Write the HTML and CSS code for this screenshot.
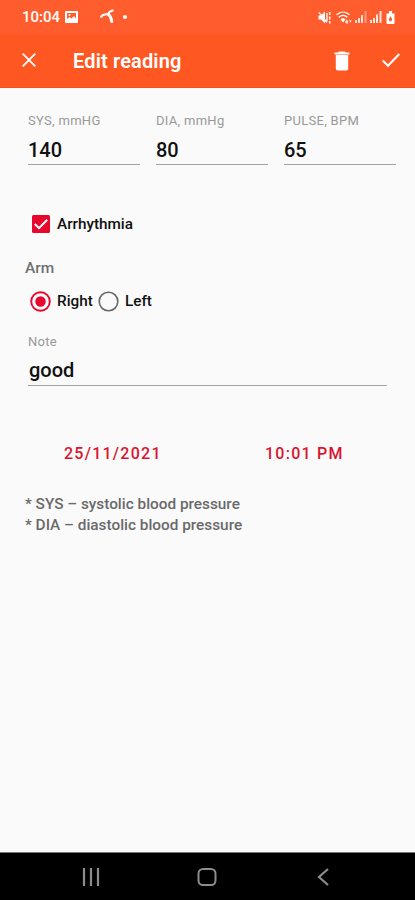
FILE: index.html
```html
<!DOCTYPE html>
<html lang="en">
  <head>
    <meta charset="UTF-8" />
    <meta name="viewport" content="width=device-width, initial-scale=1.0" />
    <title>Edit reading</title>
    <link rel="stylesheet" href="styles.css">
  </head>
  <body>
    <div class="status-bar">
      <span class="clock">10:04</span>
      <svg class="icon-picture" width="13" height="12" viewBox="0 0 13 12">
        <path fill="#fff" fill-rule="evenodd" d="M1 0h11a1 1 0 0 1 1 1v10a1 1 0 0 1-1 1H1a1 1 0 0 1-1-1V1a1 1 0 0 1 1-1zM2 2v6l2.500-2 2 1.500L9 5l2 2.500V2z" />
        <circle cx="4.500" cy="4" r="1" fill="#fff" />
      </svg>
      <svg class="icon-carrier" width="15" height="15" viewBox="0 0 15 15">
        <path fill="none" stroke="#fff" stroke-width="2" d="M.5 8.500C2.500 5.500 5 4.800 8.500 5.500M7.500 5.500C9 3 10.500 1.800 13.500 1.300" />
        <path fill="none" stroke="#fff" stroke-width="3" stroke-linecap="round" d="M9 6c1.700 1.500 2.500 3.800 2.700 6.500" />
      </svg>
      <span class="dot"></span>
      <svg class="icon-mute" width="13" height="13" viewBox="0 0 13 13">
        <path fill="#fff" d="M.5 4.500H3l4-4v12l-4-4H.5z" />
        <path stroke="#fff" stroke-width="1.300" d="M1 1.500l8 10M9 2v8" />
        <path stroke="#fff" stroke-width="1.500" stroke-dasharray="3 1.500" d="M11.700 1v11.500" />
      </svg>
      <svg class="icon-wifi" width="16" height="13" viewBox="0 0 16 13">
        <g fill="none" stroke="#fff" stroke-width="1.400">
          <path d="M.5 3.800c4-3.600 9-3.600 13 0M2.700 6.200c2.800-2.400 5.800-2.400 8.600 0" />
        </g>
        <path fill="#fff" d="M4.500 8.300c1.800-1.400 3.200-1.400 5 0L7 11.500z" />
        <path fill="#fff" opacity=".85" d="M9 10.500l2-2 1 2v2h-2zM13 8.500l2.500 1-1.500 2.500z" />
      </svg>
      <svg class="icon-signal" width="12" height="12" viewBox="0 0 12 12">
        <path fill="#fff" opacity=".8" d="M0 9h2v3H0zM3 7h2v5H3zM6 4h2v8H6z" />
        <path fill="#fff" opacity=".4" d="M9.500 0h2v12h-2z" />
      </svg>
      <svg class="icon-signal" width="12" height="12" viewBox="0 0 12 12">
        <path fill="#fff" opacity=".85" d="M0 9h2v3H0zM3 7h2v5H3zM6 3.500h2v8.500H6zM9.500 0h2v12h-2z" />
      </svg>
      <svg class="icon-battery" width="9" height="13" viewBox="0 0 9 13">
        <path fill="#fff" d="M3 0h3v2.500h2.500V12a1 1 0 0 1-1 1h-6a1 1 0 0 1-1-1V2.500H3z" />
        <path fill="#ff5b2b" d="M4.500 5L6 8a1.600 1.600 0 1 1-3 0z" />
      </svg>
    </div>

    <div class="app-bar">
      <svg class="close" width="14" height="14" viewBox="0 0 14 14">
        <path stroke="#fff" stroke-width="1.800" d="M.7.7l12.600 12.600M13.300.7L.7 13.300" />
      </svg>
      <h1>Edit reading</h1>
      <svg class="trash" width="16" height="20" viewBox="0 0 16 20">
        <path fill="#fff" d="M5 .5h6l.8 1H15.500v2H.5v-2h3.700zM1.800 4h12.400v13.500a2 2 0 0 1-2 2H3.800a2 2 0 0 1-2-2z" />
      </svg>
      <svg class="done" width="18" height="15" viewBox="0 0 18 15">
        <path fill="none" stroke="#fff" stroke-width="2" d="M.7 7.500l5.300 5.300L17.300 1" />
      </svg>
    </div>

    <div class="content">
      <div class="readings">
        <div class="field">
          <label>SYS, mmHG</label>
          <div class="value">140</div>
        </div>
        <div class="field">
          <label>DIA, mmHg</label>
          <div class="value">80</div>
        </div>
        <div class="field">
          <label>PULSE, BPM</label>
          <div class="value">65</div>
        </div>
      </div>

      <div class="option arrhythmia">
        <svg width="18" height="18" viewBox="0 0 18 18">
          <rect width="18" height="18" rx="1.500" fill="#e8062d" />
          <path fill="none" stroke="#fff" stroke-width="2" d="M2.800 9l4.200 4.200 8.200-8.400" />
        </svg>
        <span>Arrhythmia</span>
      </div>

      <div class="arm-title">Arm</div>
      <div class="option arms">
        <svg width="21" height="21" viewBox="0 0 21 21">
          <circle cx="10.500" cy="10.500" r="9.300" fill="none" stroke="#e8062d" stroke-width="1.900" />
          <circle cx="10.500" cy="10.500" r="5.200" fill="#e8062d" />
        </svg>
        <span class="right">Right</span>
        <svg width="21" height="21" viewBox="0 0 21 21">
          <circle cx="10.500" cy="10.500" r="9.300" fill="none" stroke="#666" stroke-width="1.600" />
        </svg>
        <span>Left</span>
      </div>

      <div class="field note">
        <label>Note</label>
        <div class="value">good</div>
      </div>

      <div class="when">
        <span class="date">25/11/2021</span>
        <span class="time">10:01 PM</span>
      </div>

      <div class="legend">
        <div class="sys">* SYS – systolic blood pressure</div>
        <div class="dia">* DIA – diastolic blood pressure</div>
      </div>
    </div>

    <div class="nav-bar">
      <svg width="18" height="18" viewBox="0 0 18 18">
        <path stroke="#8c8c8c" stroke-width="2.200" d="M2 0v18M9 0v18M16 0v18" />
      </svg>
      <svg class="home" width="20" height="18" viewBox="0 0 20 18">
        <rect x="1.500" y="1" width="17" height="16" rx="4.500" fill="none" stroke="#8c8c8c" stroke-width="2" />
      </svg>
      <svg width="12" height="18" viewBox="0 0 12 18">
        <path fill="none" stroke="#8c8c8c" stroke-width="2.200" d="M11 1L2 9l9 8" />
      </svg>
    </div>
  </body>
</html>
```
FILE: styles.css
```css
* {
  box-sizing: border-box;
}
body {
  margin: 0;
  height: 900px;
  display: flex;
  flex-direction: column;
  font-family: Roboto, "Liberation Sans", sans-serif;
  background: #fafafa;
  color: #111;
  overflow: hidden;
}
svg {
  display: block;
  flex: none;
}
.status-bar {
  height: 34px;
  display: flex;
  align-items: center;
  padding: 0 20px 0 22px;
  background: #ff5d2e;
  color: #fff;
}
.clock {
  width: 43px;
  font-size: 15px;
  font-weight: 500;
}
.icon-carrier {
  margin-left: 22px;
  margin-top: -1px;
}
.dot {
  width: 4px;
  height: 4px;
  margin-left: 8px;
  border-radius: 50%;
  background: #fff;
}
.icon-mute {
  margin-left: auto;
}
.icon-wifi {
  margin-left: 5px;
}
.icon-signal {
  margin-left: 3px;
}
.icon-battery {
  margin-left: 4px;
}
.app-bar {
  height: 54px;
  display: flex;
  align-items: center;
  padding: 0 15px 0 22px;
  background: #ff5722;
  border-bottom: 1px solid #f9501d;
  color: #fff;
}
.app-bar h1 {
  margin: 0 auto 0 37px;
  font-size: 20px;
  font-weight: 600;
  letter-spacing: 0.150px;
}
.close {
  margin-top: -1px;
}
.done {
  margin-left: 32px;
}
.content {
  flex: 1;
  padding: 24px 0 0 25px;
}
.readings {
  display: flex;
  gap: 16px;
  margin-left: 3px;
}
.readings .field {
  width: 112px;
}
.field {
  border-bottom: 1px solid #a3a3a3;
}
.field label {
  display: block;
  font-size: 13px;
  line-height: 18px;
  letter-spacing: 0.3px;
  color: #999;
}
.value {
  height: 34px;
  font-size: 20px;
  line-height: 40px;
  font-weight: 500;
}
.option {
  display: flex;
  align-items: center;
  font-size: 15.300px;
  font-weight: 500;
}
.arrhythmia {
  height: 22px;
  margin: 48px 0 0 7px;
  gap: 7px;
}
.arm-title {
  margin-top: 23px;
  font-size: 15.500px;
  line-height: 20px;
  font-weight: 500;
  color: #707070;
}
.arms {
  height: 24px;
  margin: 11px 0 0 5px;
  gap: 6px;
}
.right {
  width: 35px;
}
.note {
  width: 359px;
  margin: 20px 0 0 3px;
}
.note .value {
  padding-left: 1px;
  line-height: 39px;
}
.when {
  display: flex;
  margin: 57px 0 0 39px;
  font-size: 16px;
  line-height: 22px;
  font-weight: 500;
  letter-spacing: 1.250px;
  color: #d9142f;
}
.date {
  width: 201px;
}
.legend {
  margin-top: 29px;
  font-size: 15.350px;
  line-height: 21px;
  font-weight: 500;
  color: #6a6a6a;
}
.nav-bar {
  height: 48px;
  display: flex;
  align-items: center;
  justify-content: space-between;
  padding: 0 86px 0 82px;
  background: #000;
  border-top: 1px solid #777;
}
.home {
  margin-right: 3px;
}
```
